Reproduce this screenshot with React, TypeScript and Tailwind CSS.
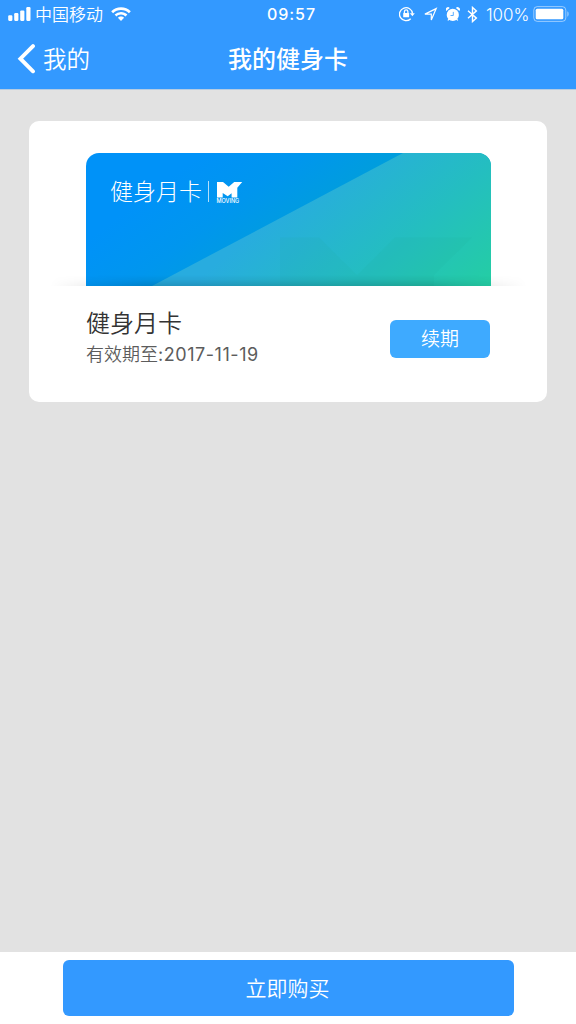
import type { ReactNode } from "react";

function SignalBars() {
  return (
    <svg className="h-[15px] w-[23px]" viewBox="0 0 23 15" fill="#fff">
      <rect x="0.2" y="8.3" width="4.2" height="5.6" rx="1.1" />
      <rect x="6.2" y="6.1" width="4.2" height="7.8" rx="1.1" />
      <rect x="12.2" y="3.4" width="4.2" height="10.5" rx="1.1" />
      <rect x="18.3" y="0.1" width="4.2" height="13.8" rx="1.1" />
    </svg>
  );
}

function WifiIcon() {
  return (
    <svg className="h-[15px] w-[20px]" viewBox="0 0 20 15" fill="#fff">
      <path d="M10 0.2c3.800 0 7.200 1.500 9.800 4l-1.900 2A11.300 11.300 0 0 0 10 3c-3 0-5.800 1.200-7.900 3.200l-1.900-2A14 14 0 0 1 10 .2Z" />
      <path d="M10 4.900c2.500 0 4.700 1 6.400 2.600l-1.900 2A6.500 6.500 0 0 0 10 7.600c-1.700 0-3.300.7-4.500 1.900l-1.900-2A9.300 9.300 0 0 1 10 4.900Z" />
      <path d="M10 9.400c1.200 0 2.300.5 3.100 1.300L10 14l-3.100-3.300c.8-.8 1.900-1.300 3.100-1.300Z" />
    </svg>
  );
}

function RotationLockIcon() {
  return (
    <svg className="h-[16px] w-[16px]" viewBox="0 0 16 16" fill="none" stroke="#fff" strokeWidth="1.300">
      <path d="M11.700 12.700A6.500 6.500 0 1 1 13.500 7.600" />
      <path d="M10.900 7.300h4.900l-2.400 2.900Z" fill="#fff" stroke="none" />
      <rect x="4.200" y="6.900" width="5.900" height="4.300" rx=".5" fill="#fff" stroke="none" />
      <path d="M5.400 7.300V5.700a1.750 1.750 0 0 1 3.500 0v1.600" />
    </svg>
  );
}

function LocationIcon() {
  return (
    <svg className="h-[14px] w-[14px]" viewBox="0 0 14 14" fill="none" stroke="#fff" strokeWidth="1.200" strokeLinejoin="miter">
      <path d="M12.200 1.600 7.300 13V7.100H.9Z" />
    </svg>
  );
}

function AlarmIcon() {
  return (
    <svg className="h-[15px] w-[14px]" viewBox="0 0 14 15" fill="#fff">
      <path d="M.2 3.900A2.200 2.200 0 0 1 3.700 1ZM13.400 3.900A2.200 2.200 0 0 0 9.900 1Z" />
      <circle cx="6.800" cy="7.900" r="6.100" />
      <path d="M2.900 12.100 1.900 13.500M10.700 12.100l1 1.400" stroke="#fff" strokeWidth="1.200" />
      <path d="M7.300 4.900v3.600H4.500" fill="none" stroke="#3399ff" strokeWidth=".8" />
    </svg>
  );
}

function BluetoothIcon() {
  return (
    <svg className="h-[17px] w-[11px]" viewBox="0 0 11 17" fill="none" stroke="#fff" strokeWidth="1.400">
      <path d="m1 4.800 8.400 7.300-3.900 3.500V1.400l3.900 3.500L1 12.200" />
    </svg>
  );
}

function BatteryIcon() {
  return (
    <svg className="h-[16px] w-[37px]" viewBox="0 0 37 16">
      <rect x=".8" y=".6" width="32" height="14.800" rx="3.500" fill="none" stroke="#fff" strokeOpacity=".5" />
      <rect x="2.700" y="2.700" width="27.600" height="10.600" rx="1.500" fill="#fff" />
      <path d="M34.400 5.300c1.600.7 1.600 4.700 0 5.400Z" fill="#fff" fillOpacity=".55" />
    </svg>
  );
}

function StatusBar() {
  return (
    <div className="flex h-[28px] items-center">
      <div className="flex w-[267px] items-center pl-[8px]">
        <SignalBars />
        <span className="mt-[2px] ml-[4px] text-[17px] leading-[28px] font-[350]">中国移动</span>
        <span className="ml-[8px]">
          <WifiIcon />
        </span>
      </div>
      <span className="text-[16px] leading-[28px] font-medium tracking-[0.95px]">09:57</span>
      <div className="flex flex-1 items-center justify-end pr-[6px]">
        <RotationLockIcon />
        <span className="ml-[9px]">
          <LocationIcon />
        </span>
        <span className="ml-[8px]">
          <AlarmIcon />
        </span>
        <span className="ml-[7px]">
          <BluetoothIcon />
        </span>
        <span className="mt-px ml-[8px] w-[47px] text-[17px] leading-[28px] font-[350] tracking-[-0.1px] whitespace-nowrap">100%</span>
        <BatteryIcon />
      </div>
    </div>
  );
}

function Header() {
  return (
    <header className="h-[90px] shrink-0 border-b border-[#b5cce3] bg-[#3399ff] text-white">
      <StatusBar />
      <div className="grid h-[61px] grid-cols-[1fr_auto_1fr] items-center">
        <button className="flex items-center pl-[17px]">
          <svg className="h-[30px] w-[19px]" viewBox="0 0 19 30" fill="none" stroke="#fff" strokeWidth="3.900" strokeLinecap="round" strokeLinejoin="miter">
            <path d="M16 2.100 3.400 14.700l12.600 12.600" />
          </svg>
          <span className="mt-[2px] ml-[7px] text-[23.500px] leading-[30px] font-[350]">我的</span>
        </button>
        <h1 className="mt-[2px] text-[24px] leading-[30px] font-medium">我的健身卡</h1>
      </div>
    </header>
  );
}

function CardArt() {
  return (
    <svg className="h-[133px] w-[405px]" viewBox="0 0 405 133">
      <defs>
        <linearGradient id="base" gradientUnits="userSpaceOnUse" x1="90" y1="20" x2="210" y2="180">
          <stop offset="0" stopColor="#0092f8" />
          <stop offset=".3" stopColor="#0096ee" />
          <stop offset="1" stopColor="#00a8c4" />
        </linearGradient>
        <linearGradient id="sweep" gradientUnits="userSpaceOnUse" x1="210" y1="40" x2="350" y2="200">
          <stop offset="0" stopColor="#28acdf" />
          <stop offset=".5" stopColor="#24bec0" />
          <stop offset="1" stopColor="#24d09f" />
        </linearGradient>
      </defs>
      <rect width="405" height="133" fill="url(#base)" />
      <path d="M317 0H405V133H66Z" fill="url(#sweep)" />
      <path d="M194 84.500H233L271 122l38-37.500h77L348 122v11H194Z" fill="#20a890" fillOpacity=".09" />
    </svg>
  );
}

function MovingLogo() {
  return (
    <div className="flex w-[26px] flex-col">
      <svg className="h-[16px] w-[26px]" viewBox="0 0 26 16" fill="#fff">
        <path d="M0 0H6L11.700 4.800 17.200 0H25.200L20.300 5.700V15.600H14.600V11.200L10.700 14.300 5.700 11V15.600H0Z" />
      </svg>
      <span className="text-[5.500px] leading-[6px] font-medium">MOVING</span>
    </div>
  );
}

function Cover() {
  return (
    <div className="grid h-[133px] grid-cols-[405px] grid-rows-[133px] justify-center">
      <div className="col-start-1 row-start-1 overflow-hidden rounded-t-[13px]">
        <CardArt />
      </div>
      <div className="z-10 col-start-1 row-start-1 flex items-start pt-[23px] pl-[24.500px] text-white">
        <span className="text-[23px] leading-[32px] font-extralight">健身月卡</span>
        <span className="mt-[5px] ml-[5.500px] h-[21px] w-px bg-white/70" />
        <span className="mt-[6px] ml-[8px]">
          <MovingLogo />
        </span>
      </div>
      <div className="col-start-1 row-start-1 -mx-[36px] h-[11px] self-end bg-[linear-gradient(to_top,rgba(0,0,0,0.14),rgba(0,0,0,0.04)_60%,transparent)] [mask-image:linear-gradient(to_right,transparent,black_20%,black_80%,transparent)]" />
    </div>
  );
}

function Panel({ children }: { children: ReactNode }) {
  return <section className="h-[281px] rounded-[10px] bg-white pt-[32px]">{children}</section>;
}

export default function App() {
  return (
    <div className="flex h-screen w-full flex-col bg-[#e2e2e2] font-['Inter','Noto_Sans_CJK_SC',sans-serif]">
      <Header />
      <main className="flex-1 px-[29px] pt-[31px]">
        <Panel>
          <Cover />
          <div className="flex items-start justify-between pr-[57px] pl-[57px]">
            <div className="pt-[22px]">
              <h2 className="text-[24px] leading-[32px] font-[350] text-[#333]">健身月卡</h2>
              <p className="text-[18px] leading-[29px] font-[350] text-[#5c5c5c]">
                有效期至<span className="font-normal tracking-[0.550px]">:2017-11-19</span>
              </p>
            </div>
            <button className="mt-[34px] h-[38px] w-[100px] rounded-[6px] bg-[#3eaaff] pt-px text-[19px] leading-[37px] font-[350] text-white">
              续期
            </button>
          </div>
        </Panel>
      </main>
      <footer className="flex h-[72px] shrink-0 justify-center bg-white pt-[8px]">
        <button className="h-[56px] w-[451px] rounded-[6px] bg-[#3399ff] pt-px pr-[1px] text-[21px] leading-[55px] font-[350] text-white">
          立即购买
        </button>
      </footer>
    </div>
  );
}
